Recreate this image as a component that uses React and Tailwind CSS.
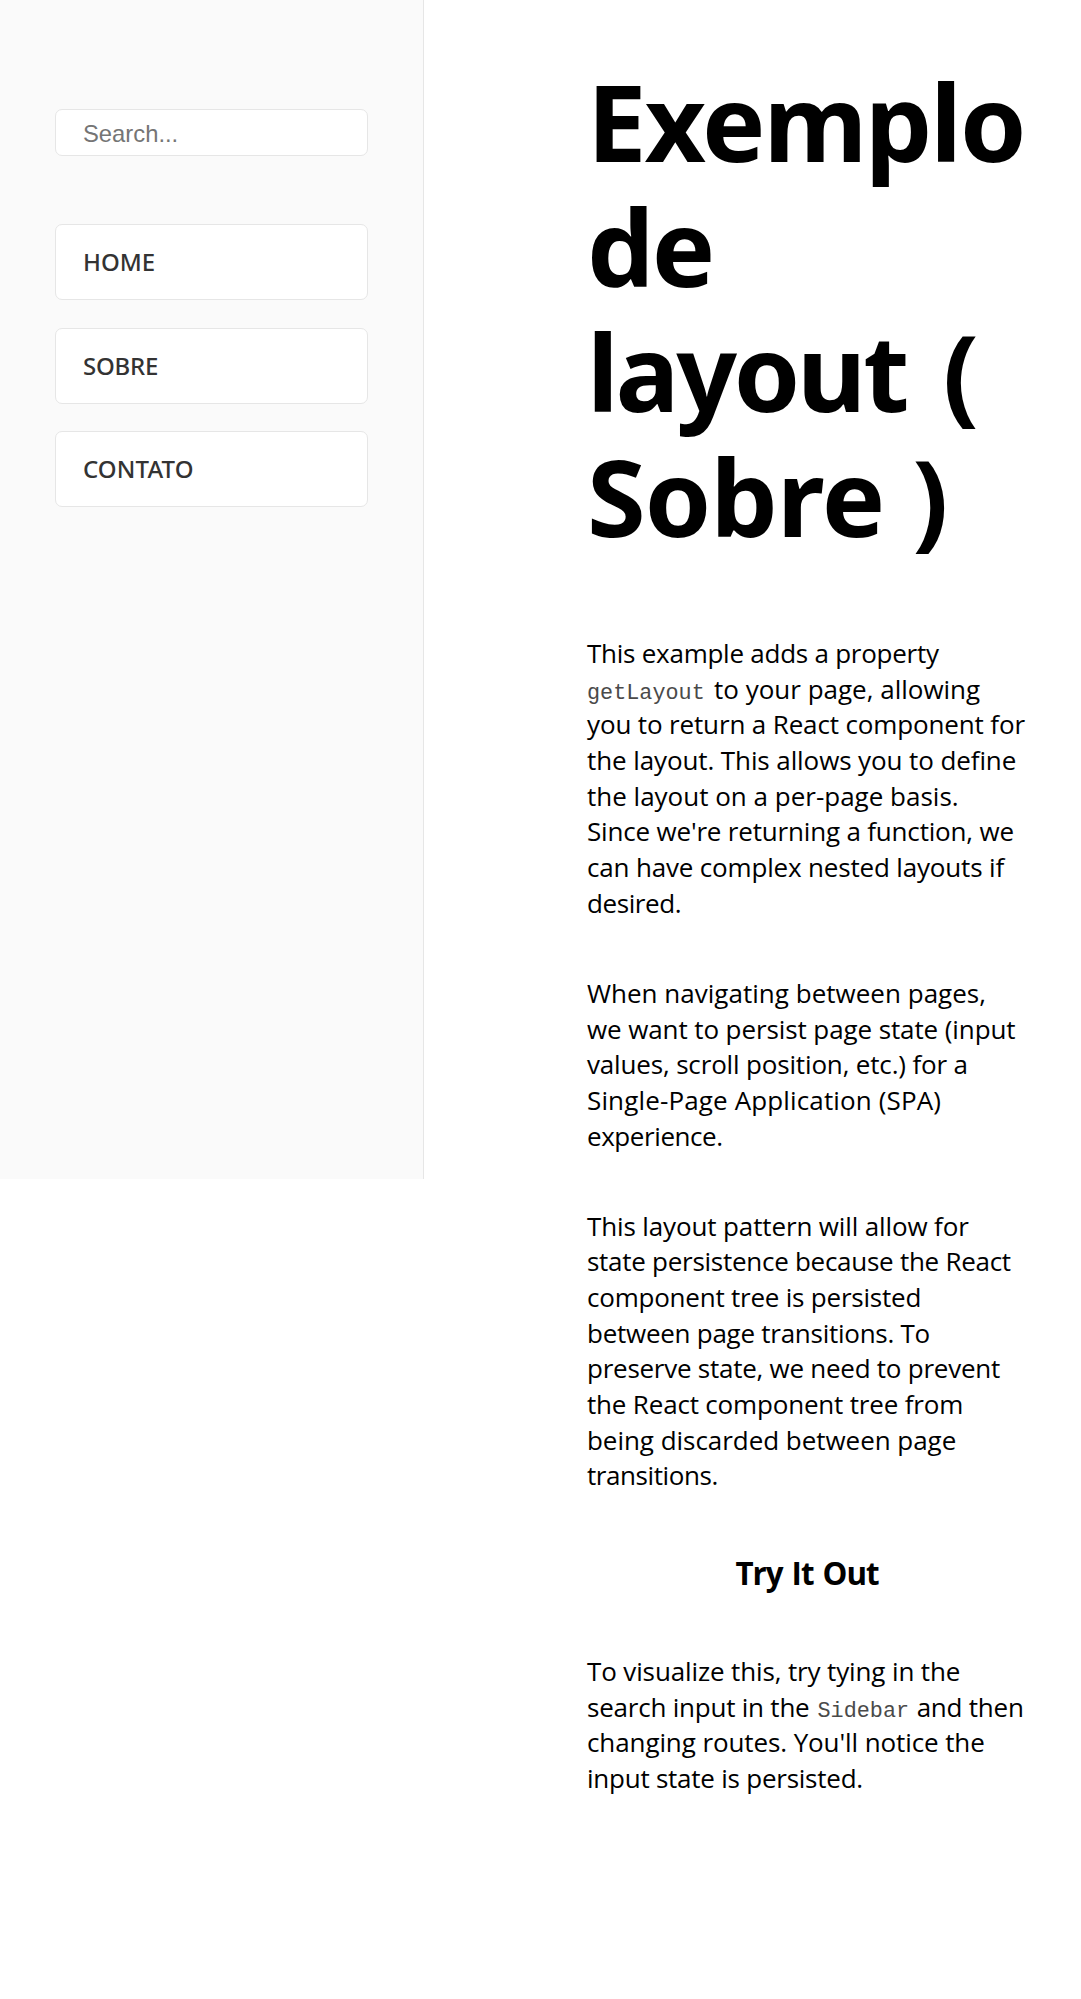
function Line({ className = "", children }) {
  return <span className={`block whitespace-nowrap ${className}`}>{children}</span>;
}

function Paragraph({ lines, className = "" }) {
  return (
    <p className={`text-[26px] leading-[35.67px] ${className}`}>
      {lines.map(([text, tracking], i) => (
        <Line key={i} className={tracking}>
          {text}
        </Line>
      ))}
    </p>
  );
}

function Code({ children }) {
  return (
    <code className="font-['Liberation_Mono',monospace] text-[21.8px] leading-none tracking-normal text-[#4a4a4a]">
      {children}
    </code>
  );
}

const intro = [
  ["This example adds a property", "tracking-[-0.25px]"],
  [
    <>
      <Code>getLayout</Code>
      <span className="ml-[2.5px]"> to your page, allowing</span>
    </>,
    "tracking-[0px]",
  ],
  ["you to return a React component for", "tracking-[-0.14px]"],
  ["the layout. This allows you to define", "tracking-[-0.1px]"],
  ["the layout on a per-page basis.", "tracking-[0px]"],
  ["Since we're returning a function, we", "tracking-[-0.18px]"],
  ["can have complex nested layouts if", "tracking-[-0.17px]"],
  ["desired.", "tracking-[-0.41px]"],
];

const navigating = [
  ["When navigating between pages,", "tracking-[0.02px]"],
  ["we want to persist page state (input", "tracking-[-0.1px]"],
  ["values, scroll position, etc.) for a", "tracking-[-0.16px]"],
  ["Single-Page Application (SPA)", "tracking-[0.14px]"],
  ["experience.", "tracking-[-0.42px]"],
];

const pattern = [
  ["This layout pattern will allow for", "tracking-[-0.13px]"],
  ["state persistence because the React", "tracking-[-0.27px]"],
  ["component tree is persisted", "tracking-[-0.22px]"],
  ["between page transitions. To", "tracking-[-0.26px]"],
  ["preserve state, we need to prevent", "tracking-[-0.25px]"],
  ["the React component tree from", "tracking-[-0.18px]"],
  ["being discarded between page", "tracking-[-0.04px]"],
  ["transitions.", "tracking-[-0.42px]"],
];

const tryIt = [
  ["To visualize this, try tying in the", "tracking-[-0.13px]"],
  [
    <>
      search input in the <span className="ml-[1.5px]"><Code>Sidebar</Code></span>
      <span className="ml-[1px]"> and then</span>
    </>,
    "tracking-[-0.22px]",
  ],
  ["changing routes. You'll notice the", "tracking-[-0.1px]"],
  ["input state is persisted.", "tracking-[-0.24px]"],
];

const links = [
  ["HOME", "tracking-[0px]"],
  ["SOBRE", "tracking-[-0.2px]"],
  ["CONTATO", "tracking-[0.1px]"],
];

export default function App() {
  return (
    <div className="flex min-h-[1999px] items-start overflow-hidden bg-white font-['Open_Sans',sans-serif] text-black">
      <nav className="h-[1179px] w-[424px] shrink-0 border-r border-[#e6e6e6] bg-[#fafafa] pt-[109px] pr-[55px] pl-[55px]">
        <input
          type="text"
          placeholder="Search..."
          className="block h-[47px] w-[313px] rounded-[7px] border border-[#e6e6e6] bg-white px-[27px] pt-[2px] font-['Liberation_Sans',sans-serif] text-[23.8px] placeholder:text-[#757575]"
        />
        <div className="mt-[68px] flex w-[313px] flex-col gap-[27.5px]">
          {links.map(([label, tracking]) => (
            <a
              key={label}
              href="#"
              className={`flex h-[76px] items-center rounded-[7px] border border-[#e6e6e6] bg-white px-[27px] font-['Noto_Sans',sans-serif] text-[24px] font-medium text-[#333] ${tracking}`}
            >
              {label}
            </a>
          ))}
        </div>
      </nav>
      <main className="ml-[163px] w-[440px] shrink-0 pt-[57.5px]">
        <h1 className="font-['Noto_Sans',sans-serif] text-[106.5px] leading-[125px] font-bold">
          <Line className="tracking-[-2.09px]">Exemplo</Line>
          <Line className="tracking-[-2.6px]">de</Line>
          <Line className="tracking-[-3.2px]">
            layout <span className="ml-[12px]">(</span>
          </Line>
          <Line className="tracking-[-0.83px]">
            Sobre <span className="ml-[1px]">)</span>
          </Line>
        </h1>
        <Paragraph lines={intro} className="mt-[78.5px]" />
        <Paragraph lines={navigating} className="mt-[54.6px]" />
        <Paragraph lines={pattern} className="mt-[54.2px]" />
        <h2 className="mt-[58.5px] text-center text-[31.3px] leading-[43px] font-bold tracking-[-1.05px] [word-spacing:2px]">
          Try It Out
        </h2>
        <Paragraph lines={tryIt} className="mt-[58.5px]" />
      </main>
    </div>
  );
}
